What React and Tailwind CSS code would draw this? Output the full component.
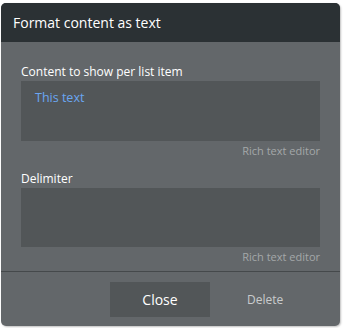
export default function App() {
  return (
    <div className="w-[343px] h-[328px] bg-white pt-[3px] pl-[1px] font-['Open_Sans',sans-serif]">
      <div className="w-[339px] h-[323px] rounded-[5px] overflow-hidden bg-[#63676a] flex flex-col shadow-[1px_1px_2px_rgba(0,0,0,0.25)]">
        {/* Header */}
        <div className="h-[39px] shrink-0 bg-[#2b3134] flex items-center px-3">
          <span className="text-[14px] text-white">Format content as text</span>
        </div>

        {/* Body */}
        <div className="flex flex-col px-5 pt-[21px]">
          <label className="text-[12px] leading-[18px] text-white">Content to show per list item</label>
          <div className="h-[60px] bg-[#525658] px-[14px] pt-[3px]">
            <span className="text-[12.5px] text-[#6aa6f2]">This text</span>
          </div>
          <div className="text-right text-[11px] leading-[20px] text-[#a3a7a9]">Rich text editor</div>

          <label className="mt-[9px] text-[12px] leading-[18px] text-white">Delimiter</label>
          <div className="h-[59px] bg-[#525658]" />
          <div className="text-right text-[11px] leading-[20px] text-[#a3a7a9]">Rich text editor</div>
        </div>

        {/* Footer */}
        <div className="mt-[4px] border-t border-[#45494b] flex items-start pt-[10px] pl-[109px]">
          <button className="w-[100px] h-[35px] bg-[#525658] text-[14px] text-white">Close</button>
          <button className="ml-[37px] h-[35px] text-[12px] text-[#c9cccd]">Delete</button>
        </div>
      </div>
    </div>
  );
}
